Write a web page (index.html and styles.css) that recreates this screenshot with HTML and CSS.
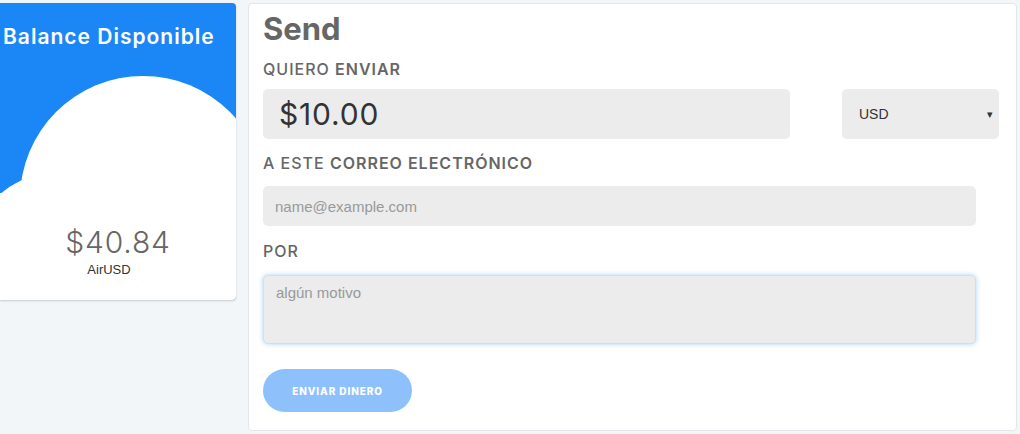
FILE: index.html
```html
<!DOCTYPE html>
<html lang="es">

<head>
    <meta charset="UTF-8">
    <meta name="viewport" content="width=device-width, initial-scale=1.0">
    <title>Send</title>
    <link rel="stylesheet" href="styles.css">
</head>

<body>

    <div class="layout">
        <div class="balance-card">
            <svg class="cloud" width="236" height="297" viewBox="0 0 236 297">
                <rect x="0" y="0" width="236" height="297" fill="#1b86f6" />
                <circle cx="143" cy="196" r="123" fill="#fff" />
                <circle cx="62" cy="262" r="94" fill="#fff" />
                <rect x="0" y="190" width="236" height="107" fill="#fff" />
            </svg>
            <h3 class="balance-title">Balance Disponible</h3>
            <div class="balance-amount">
                <div class="amount">$40.84</div>
                <div class="currency">AirUSD</div>
            </div>
        </div>

        <div class="send-card">
            <h1>Send</h1>
            <label class="field-label">QUIERO <b>ENVIAR</b></label>
            <div class="amount-row">
                <input class="amount-input" type="text" value="$10.00">
                <div class="select">
                    <span>USD</span>
                    <span class="caret">&#9662;</span>
                </div>
            </div>

            <label class="field-label">A ESTE <b>CORREO ELECTRÓNICO</b></label>
            <input class="text-input" type="text" placeholder="name@example.com">

            <label class="field-label">POR</label>
            <textarea class="text-input reason" placeholder="algún motivo"></textarea>

            <button class="send-btn">ENVIAR DINERO</button>
        </div>
    </div>

</body>

</html>
```

FILE: styles.css
```css
body {
    margin: 0;
    background-color: #f3f6f9;
    font-family: Inter, "Noto Sans", sans-serif;
    color: #666;
}

.layout {
    display: flex;
    align-items: flex-start;
    gap: 12px;
    padding-top: 3px;
}

.balance-card {
    position: relative;
    width: 236px;
    height: 297px;
    flex-shrink: 0;
    background-color: #fff;
    border-radius: 0 4px 4px 0;
    box-shadow: 0 1px 2px rgba(0, 0, 0, 0.18);
    overflow: hidden;
}

.cloud {
    position: absolute;
    top: 0;
    left: 0;
}

.balance-title {
    position: relative;
    margin: 0;
    padding: 21px 0 0 3px;
    color: #fff;
    font-size: 21px;
    font-weight: 600;
    letter-spacing: 1px;
}

.balance-amount {
    position: absolute;
    left: 0;
    right: 0;
    top: 222px;
    text-align: center;
}

.amount {
    font-size: 30px;
    font-weight: 300;
    color: #666;
    line-height: 34px;
    letter-spacing: 0.8px;
}

.currency {
    font-family: "Liberation Sans", Arial, sans-serif;
    font-size: 13px;
    color: #333;
    margin: 3px 18px 0 0;
}

.send-card {
    width: 769px;
    height: 428px;
    box-sizing: border-box;
    background-color: #fff;
    border: 1px solid #e3e6ea;
    border-radius: 4px;
    padding: 8px 0 18px 14px;
    display: flex;
    flex-direction: column;
    align-items: flex-start;
}

.send-card h1 {
    margin: 0 0 14px;
    font-size: 31px;
    font-weight: 700;
    color: #666;
    line-height: 34px;
}

.field-label {
    font-size: 16px;
    font-weight: 500;
    color: #666;
    letter-spacing: 1px;
    line-height: 18px;
}

.field-label b {
    font-weight: 600;
}

.amount-row {
    display: flex;
    justify-content: space-between;
    width: 736px;
    margin: 11px 0 15px;
}

.amount-input {
    width: 527px;
    height: 50px;
    box-sizing: border-box;
    border: none;
    border-radius: 5px;
    background-color: #ececec;
    padding: 0 16px;
    font-family: inherit;
    font-size: 30px;
    letter-spacing: 0.8px;
    color: #333;
    outline: none;
}

.select {
    width: 157px;
    height: 50px;
    box-sizing: border-box;
    border-radius: 5px;
    background-color: #ececec;
    padding: 0 6px 0 17px;
    display: flex;
    align-items: center;
    justify-content: space-between;
    font-family: "Liberation Sans", Arial, sans-serif;
    font-size: 14px;
    color: #333;
}

.caret {
    font-size: 11px;
}

.text-input {
    width: 713px;
    height: 40px;
    box-sizing: border-box;
    border: none;
    border-radius: 5px;
    background-color: #ececec;
    padding: 0 12px;
    margin: 14px 0 16px;
    font-family: "Liberation Sans", Arial, sans-serif;
    font-size: 15px;
    color: #333;
    outline: none;
}

.text-input::placeholder {
    color: #999;
}

.reason {
    height: 69px;
    margin: 15px 0 25px;
    padding: 8px 12px;
    resize: none;
    border: 1px solid #dcdcdc;
    box-shadow: 0 0 5px rgba(102, 175, 240, 0.55);
}

.send-btn {
    width: 149px;
    height: 43px;
    border: none;
    border-radius: 22px;
    background-color: #8ec1fb;
    color: #fff;
    font-family: inherit;
    font-size: 10px;
    font-weight: 800;
    letter-spacing: 0.9px;
}
```
